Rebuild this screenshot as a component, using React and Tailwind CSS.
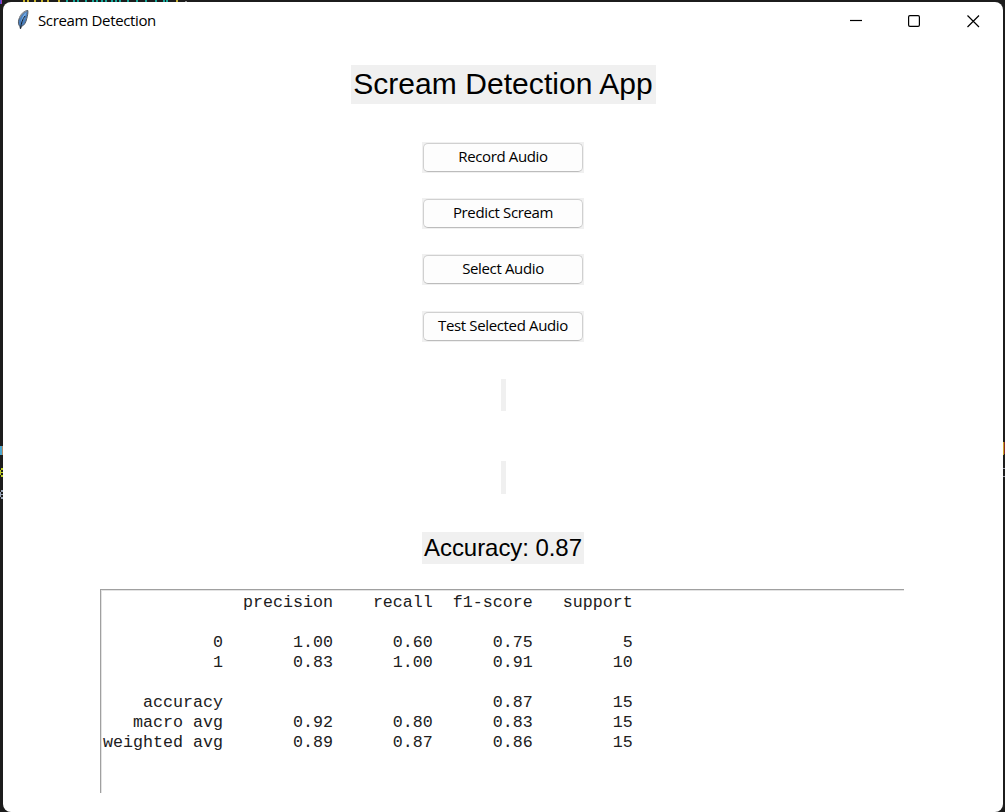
const report = `              precision    recall  f1-score   support

           0       1.00      0.60      0.75         5
           1       0.83      1.00      0.91        10

    accuracy                           0.87        15
   macro avg       0.92      0.80      0.83        15
weighted avg       0.89      0.87      0.86        15`;

const actions = ["Record Audio", "Predict Scream", "Select Audio", "Test Selected Audio"];

function Feather() {
  return (
    <svg className="mt-[8px] ml-[14px] h-5 w-3 shrink-0" viewBox="0 0 12 20">
      <path d="M10.800 .4C7 1 3.500 4.500 2 9c-1 3-.7 5.500.8 7.500L3.500 19l.8-2.500C7.500 15.500 9 12 9.800 8.500 10.500 5.500 11.200 3 10.800.4Z" fill="#4a7fbd" stroke="#555b63" strokeWidth="1" />
      <path d="M9.500 2C6.500 4 4.500 8 4 12l3-3 1.500-4Z" fill="#78aee6" />
      <path d="M2.500 8C4 4.500 6.500 2 9.500 1.200" fill="none" stroke="#8d9197" strokeWidth="1.200" />
      <path d="M8 6C5.500 9 4.300 13 3.500 18.500" fill="none" stroke="#17202b" strokeWidth="1" />
    </svg>
  );
}

function Backdrop() {
  return (
    <svg className="absolute inset-0" width="1005" height="812" shapeRendering="crispEdges">
      <path d="M0 0h1v4H0z" fill="#4a50d8" />
      <path d="M1 0h1v4H1z" fill="#a03fb0" />
      <path d="M23 0h2v2h-2zM27 0h2v2h-2zM34 0h2v2h-2zM41 0h2v2h-2zM47 0h2v2h-2zM58 0h2v2h-2z" fill="#c9b42c" />
      <path d="M66 0h2v2h-2zM73 0h2v2h-2zM77 0h2v2h-2zM85 0h2v2h-2zM92 0h2v2h-2zM96 0h2v2h-2zM101 0h2v2h-2zM105 0h2v2h-2zM111 0h2v2h-2zM115 0h2v2h-2zM119 0h2v2h-2zM127 0h2v2h-2zM136 0h2v2h-2zM145 0h2v2h-2zM155 0h2v2h-2zM163 0h2v2h-2zM166 0h2v2h-2z" fill="#16a99b" />
      <path d="M176 0h2v2h-2z" fill="#c5ae32" />
      <path d="M185 1h2v1h-2z" fill="#888888" />
      <path d="M0 446h2v9H0z" fill="#4aa6ce" />
      <path d="M2 446h1v9H2z" fill="#b58a62" />
      <path d="M0 470h1v5H0zM1 468h2v2H1zM1 472h2v1H1zM1 475h2v2H1z" fill="#bdcc25" />
      <path d="M0 492h1v5H0zM1 490h2v2H1zM1 494h2v1H1zM1 497h2v2H1z" fill="#9aa5b8" />
      <path d="M1003 442h1v13h-1z" fill="#c9a62c" />
      <path d="M1004 442h1v12h-1z" fill="#8d2b22" />
      <path d="M1003 468h2v1h-2zM1003 476h2v1h-2z" fill="#9a9ba9" />
    </svg>
  );
}

export default function App() {
  return (
    <div className="relative h-[812px] w-[1005px] overflow-hidden bg-[#1c1c1c] pt-[2px] pr-[2px] pl-[3px]">
      <Backdrop />
      <main className="relative flex h-[810px] w-[1000px] flex-col items-center rounded-lg bg-white text-black">
        <header className="flex h-[38px] w-full shrink-0 items-start">
          <div className="flex flex-1">
            <Feather />
            <h1 className="mt-[8px] ml-[9px] font-['Open_Sans',sans-serif] text-[15px] leading-5 tracking-[-0.36px] whitespace-nowrap">Scream Detection</h1>
          </div>
          <svg className="mt-[12px] mr-[23px]" width="131" height="14" fill="none" stroke="#000" strokeWidth="1.2">
            <path d="M1 6.500h12" />
            <rect x="59.600" y="1.600" width="10.800" height="10.800" rx="1.300" />
            <path d="m118.500 1.500 11.500 11.500m0-11.500L118.500 13" />
          </svg>
        </header>
        <h2 className="mt-[25px] h-[39px] w-[305px] shrink-0 bg-[#f0f0f0] text-center font-['Liberation_Sans',sans-serif] text-[30px] leading-[37px] tracking-[0.06px] whitespace-nowrap">Scream Detection App</h2>
        <div className="mt-[38px] flex shrink-0 flex-col gap-[25.200px]">
          {actions.map((label) => (
            <div key={label} className="h-[31px] w-[162px] bg-[#f0f0f0] p-px">
              <button className="block h-[29px] w-[160px] rounded-[5px] border border-[#d0d0d0] border-b-[#bcbcbc] bg-[#fdfdfd] pb-[2px] text-center font-['Open_Sans',sans-serif] text-[15px] leading-[25px] tracking-[-0.36px] whitespace-nowrap">{label}</button>
            </div>
          ))}
        </div>
        <div className="mt-[37.400px] h-8 w-[5px] shrink-0 bg-[#f0f0f0]" />
        <div className="mt-[50px] h-[33px] w-[5px] shrink-0 bg-[#f0f0f0]" />
        <p className="mt-[38px] h-8 w-[162px] shrink-0 bg-[#f0f0f0] text-center font-['Liberation_Sans',sans-serif] text-[24px] leading-8 tracking-[-0.06px] whitespace-nowrap">Accuracy: 0.87</p>
        <div className="mt-[25px] mr-[2px] h-[204px] w-[804px] shrink-0 border-t border-l border-[#a0a0a0]">
          <pre className="h-full border-t border-l border-[#e3e3e3] pt-[2px] pl-px font-['Liberation_Mono',monospace] text-[16.667px] leading-5 text-[#202020]">{report}</pre>
        </div>
      </main>
    </div>
  );
}
